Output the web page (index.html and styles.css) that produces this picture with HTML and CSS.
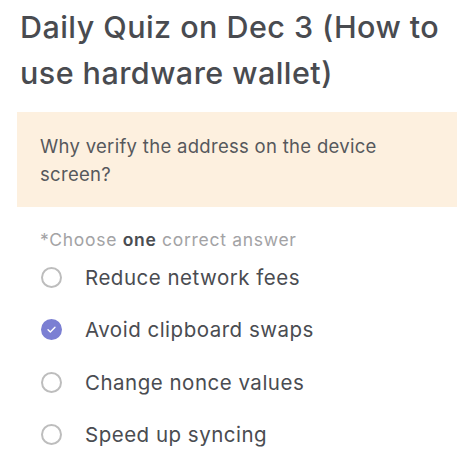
FILE: index.html
```html
<!DOCTYPE html>
<html lang="en">
<head>
<meta charset="utf-8">
<title>Daily Quiz</title>
<link rel="stylesheet" href="styles.css">
</head>
<body>
<main class="quiz">
  <h1 class="quiz-title">Daily Quiz on Dec 3 (How to use hardware wallet)</h1>
  <div class="question">Why verify the address on the device screen?</div>
  <p class="hint">*Choose <b>one</b> correct answer</p>
  <ul class="options">
    <li class="option"><span class="radio"></span><span class="label">Reduce network fees</span></li>
    <li class="option selected"><span class="radio"><svg viewBox="0 0 22 22" width="22" height="22"><path d="M6.5 11.3l3 3 6-6.2" fill="none" stroke="#fff" stroke-width="1.8" stroke-linecap="round" stroke-linejoin="round"/></svg></span><span class="label">Avoid clipboard swaps</span></li>
    <li class="option"><span class="radio"></span><span class="label">Change nonce values</span></li>
    <li class="option"><span class="radio"></span><span class="label">Speed up syncing</span></li>
  </ul>
</main>
</body>
</html>
```
FILE: styles.css
```css
html, body {
  margin: 0;
  background: #fff;
}
body {
  font-family: Inter, "Noto Sans", sans-serif;
  color: #4a4c51;
}
.quiz {
  padding: 4px 17px 0 17px;
}
.quiz-title {
  margin: 0 0 0 3px;
  font-size: 30.5px;
  font-weight: 500;
  line-height: 46px;
  letter-spacing: 0.45px;
  color: #494b50;
}
.question {
  margin-top: 16px;
  background: #fdf0df;
  padding: 20px 23px 19px;
  font-size: 18.5px;
  line-height: 28px;
  letter-spacing: 0.3px;
  color: #56585c;
}
.hint {
  margin: 22px 0 0 23px;
  font-size: 17.5px;
  line-height: 22px;
  letter-spacing: 0.7px;
  color: #a3a3a5;
}
.hint b {
  color: #4a4c51;
  font-weight: 600;
}
.options {
  list-style: none;
  margin: 0 0 0 24px;
  padding: 0;
}
.option {
  display: flex;
  align-items: center;
  height: 52.5px;
  gap: 23px;
  font-size: 20.5px;
  letter-spacing: 0.5px;
  color: #4a4c51;
}
.radio {
  width: 17px;
  height: 17px;
  border: 2px solid #bdbdbd;
  border-radius: 50%;
  flex: none;
  display: flex;
  align-items: center;
  justify-content: center;
}
.selected .radio {
  background: #7b7fd3;
  border-color: #7b7fd3;
}
.radio svg {
  width: 21px;
  height: 21px;
}
```
